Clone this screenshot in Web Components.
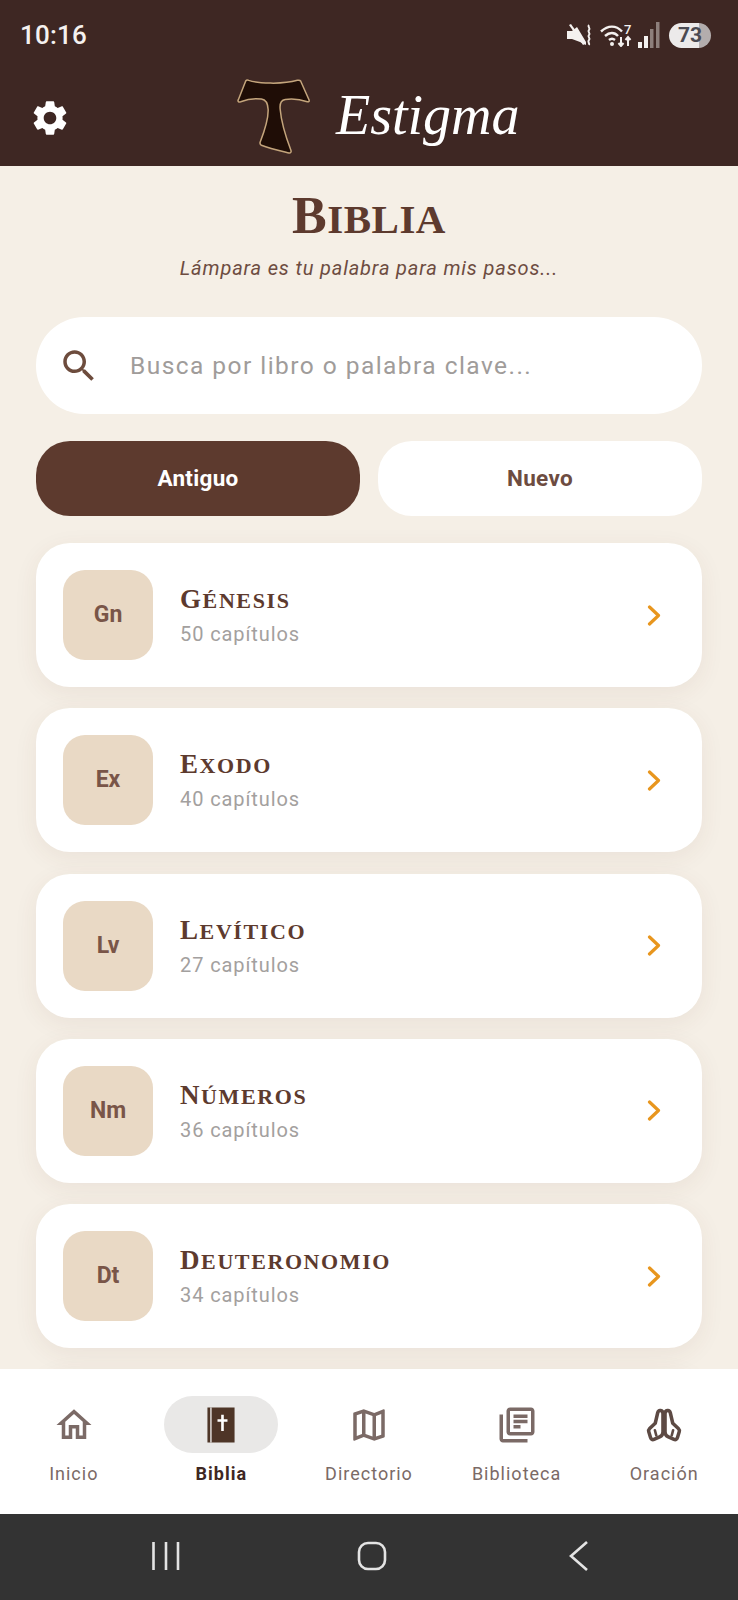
<!DOCTYPE html>
<html lang="es">
<head>
<meta charset="utf-8">
<title>Estigma - Biblia</title>
<style>
    html, body { margin: 0; padding: 0; background: #f5efe6; }
</style>
</head>
<body>
<app-shell>
    <status-bar slot="top"></status-bar>
    <app-bar slot="top"></app-bar>

    <page-title heading="Biblia">Lámpara es tu palabra para mis pasos...</page-title>
    <search-box placeholder="Busca por libro o palabra clave..."></search-box>
    <testament-tabs></testament-tabs>
    <book-card abbr="Gn" name="Génesis" chapters="50 capítulos"></book-card>
    <book-card abbr="Ex" name="Exodo" chapters="40 capítulos"></book-card>
    <book-card abbr="Lv" name="Levítico" chapters="27 capítulos"></book-card>
    <book-card abbr="Nm" name="Números" chapters="36 capítulos"></book-card>
    <book-card abbr="Dt" name="Deuteronomio" chapters="34 capítulos"></book-card>
    <book-card></book-card>

    <bottom-nav slot="bottom"></bottom-nav>
    <system-nav slot="bottom"></system-nav>
</app-shell>

<script>
// material style icons, all on a 24 box
const icons = {
    home: '<path fill="currentColor" d="M12 5.69l5 4.5V18h-2v-6H9v6H7v-7.81l5-4.5M12 3L2 12h3v8h6v-6h2v6h6v-8h3L12 3z"/>',
    map: '<path fill="currentColor" d="M20.5 3l-.16.03L15 5.1 9 3 3.36 4.9c-.21.07-.36.25-.36.48V20.5c0 .28.22.5.5.5l.16-.03L9 18.9l6 2.1 5.64-1.9c.21-.07.36-.25.36-.48V3.5c0-.28-.22-.5-.5-.5zM10 5.47l4 1.4v11.66l-4-1.4V5.47zm-5 .99l3-1.01v11.7l-3 1.16V6.46zm14 11.08l-3 1.01V6.86l3-1.16v11.84z"/>',
    library: '<path fill="currentColor" d="M4 6H2v14c0 1.1.9 2 2 2h14v-2H4V6zm16-4H8c-1.1 0-2 .9-2 2v12c0 1.1.9 2 2 2h12c1.1 0 2-.9 2-2V4c0-1.1-.9-2-2-2zm0 14H8V4h12v12zM10 9h8v2h-8zm0 3h4v2h-4zm0-6h8v2h-8z"/>',
    bible: '<rect x="4.250" y="2" width="15.500" height="20" fill="#4e3527"/><rect x="5.900" y="2" width=".7" height="20" fill="#fff"/><path fill="#fff" d="M12.100 6.200h1.500v2.500h2.100v1.500h-2.100v5.200h-1.500v-5.200H10V8.700h2.100z"/>',
    pray: '<g fill="none" stroke="currentColor" stroke-width="2" stroke-linejoin="round" stroke-linecap="round"><path d="M11.400 16.500V5.600c0-2.200-2.500-2.500-3-.6L7 11l-3.200 3c-.6.600-.7 1.200-.5 1.900l1 3.300c.3 1 1.100 1.400 2 1l3.200-1.400c1.200-.5 1.900-1.500 1.900-2.800"/><path d="M12.600 16.500V5.600c0-2.200 2.500-2.500 3-.6L17 11l3.200 3c.6.600.7 1.200.5 1.900l-1 3.300c-.3 1-1.100 1.400-2 1l-3.200-1.400c-1.200-.5-1.900-1.500-1.900-2.800"/><path d="M6.800 15l.8 3M17.200 15l-.8 3" stroke-width="1.500"/></g>'
};

class AppShell extends HTMLElement {
    constructor() {
        super();
        this.attachShadow({mode: 'open'});
        this.shadowRoot.innerHTML = `
            <style>
                :host { display: flex; flex-direction: column; height: 1600px; overflow: hidden; background: #f5efe6; }
                main {
                    flex: 1;
                    min-height: 0;
                    overflow: hidden;
                    padding: 0 36px;
                    display: flex;
                    flex-direction: column;
                }
            </style>
            <slot name="top"></slot>
            <main><slot></slot></main>
            <slot name="bottom"></slot>
        `;
    }
}

class StatusBar extends HTMLElement {
    constructor() {
        super();
        this.attachShadow({mode: 'open'});
        this.shadowRoot.innerHTML = `
            <style>
                :host {
                    display: flex;
                    align-items: center;
                    height: 70px;
                    padding: 0 27px 0 20px;
                    background: #3e2723;
                    color: #f4f1ef;
                    font-family: Roboto, sans-serif;
                }
                .time { font-size: 26px; font-weight: 500; letter-spacing: .2px; }
                .icons { margin-left: auto; display: flex; align-items: center; gap: 6px; }
                svg { display: block; }
                .battery {
                    width: 42px;
                    height: 25px;
                    margin-left: 3px;
                    border-radius: 13px;
                    background: linear-gradient(90deg, #eceaea 71%, #b3adad 71%);
                    color: #4a4a52;
                    font-size: 21px;
                    font-weight: 700;
                    line-height: 25px;
                    text-align: center;
                }
            </style>
            <span class="time">10:16</span>
            <div class="icons">
                <svg width="25" height="22" viewBox="0 0 25 22">
                    <path fill="currentColor" d="M0 7h5L10 3 19 18v3L13 18 5 15H0z"/>
                    <path fill="currentColor" d="M2 1l2-1 14 20-2 1z"/>
                    <path fill="none" stroke="currentColor" stroke-width="2" d="M22 1c-2 2 2 3 0 5s2 3 0 5 2 3 0 5 1 3 0 5"/>
                </svg>
                <svg style="margin-left:2px" width="32" height="24" viewBox="0 0 32 24">
                    <g fill="none" stroke="currentColor" stroke-width="2.400">
                        <path d="M1 8.500c7-6.500 15-6.500 21 0"/>
                        <path d="M5 13c4.500-4 9.500-4 13 0"/>
                        <path d="M9 17c2-1.700 4-1.700 6 0"/>
                    </g>
                    <circle cx="12" cy="21" r="2" fill="currentColor"/>
                    <path fill="none" stroke="currentColor" stroke-width="2" d="M21 14v9M18.500 20l2.500 3 2.500-3M28 23v-9M25.500 17l2.500-3 2.500 3"/>
                    <text x="24" y="11" font-family="Roboto, sans-serif" font-size="13" font-weight="500" fill="currentColor">7</text>
                </svg>
                <svg width="22" height="26" viewBox="0 0 22 26">
                    <rect x="0" y="20" width="4" height="6" fill="currentColor"/>
                    <rect x="6" y="14" width="4" height="12" fill="currentColor"/>
                    <rect x="12" y="7" width="3.500" height="19" fill="#8d7f7b"/>
                    <rect x="18" y="0" width="3.500" height="26" fill="#8d7f7b"/>
                </svg>
                <div class="battery">73</div>
            </div>
        `;
    }
}

class AppBar extends HTMLElement {
    constructor() {
        super();
        this.attachShadow({mode: 'open'});
        this.shadowRoot.innerHTML = `
            <style>
                :host {
                    display: flex;
                    align-items: center;
                    height: 96px;
                    padding-left: 29px;
                    background: #3e2723;
                    color: #fff;
                }
                svg { display: block; flex: none; }
                .logo { margin: -2px 0 0 164px; }
                .name {
                    margin: -6px 0 0 24px;
                    font-family: "Liberation Serif", serif;
                    font-style: italic;
                    font-size: 56px;
                    line-height: 70px;
                }
            </style>
            <svg width="42" height="42" viewBox="0 0 24 24">
                <path fill="currentColor" d="M19.14 12.94c.04-.3.06-.61.06-.94 0-.32-.02-.64-.07-.94l2.03-1.58c.18-.14.23-.41.12-.61l-1.92-3.32c-.12-.22-.37-.29-.59-.22l-2.39.96c-.5-.38-1.03-.7-1.62-.94l-.36-2.54c-.04-.24-.24-.41-.48-.41h-3.84c-.24 0-.43.17-.47.41l-.36 2.54c-.59.24-1.13.57-1.62.94l-2.39-.96c-.22-.08-.47 0-.59.22L2.74 8.87c-.12.21-.08.47.12.61l2.03 1.58c-.05.3-.09.63-.09.94s.02.64.07.94l-2.03 1.58c-.18.14-.23.41-.12.61l1.92 3.32c.12.22.37.29.59.22l2.39-.96c.5.38 1.03.7 1.62.94l.36 2.54c.05.24.24.41.48.41h3.84c.24 0 .44-.17.47-.41l.36-2.54c.59-.24 1.13-.56 1.62-.94l2.39.96c.22.08.47 0 .59-.22l1.92-3.32c.12-.22.07-.47-.12-.61l-2.01-1.58zM12 15.6c-1.98 0-3.6-1.62-3.6-3.6s1.62-3.6 3.6-3.6 3.6 1.62 3.6 3.6-1.62 3.6-3.6 3.6z"/>
            </svg>
            <svg class="logo" width="77" height="78" viewBox="40 25 230 233">
                <path fill="#1f0d06" stroke="#c4a57c" stroke-width="4.500" stroke-linejoin="round"
                    d="M72 34c2-3 5-4 9-2 25 9 100 13 145 0 4-1 8-1 10 2l25 56c2 5-1 7-5 6-20-7-45-10-66-7-14 2-17 12-15 30 3 35 18 85 32 122 2 5-1 9-6 8-30-7-58-13-82-23-4-2-5-5-4-9 14-36 25-70 24-98-1-20-6-29-20-31-20-3-45 1-62 8-6 2-10-1-7-6z"/>
            </svg>
            <span class="name">Estigma</span>
        `;
    }
}

class PageTitle extends HTMLElement {
    constructor() {
        super();
        this.attachShadow({mode: 'open'});
        this.shadowRoot.innerHTML = `
            <style>
                :host { display: block; flex: none; height: 151px; text-align: center; color: #5d3a2e; }
                h1 {
                    margin: 0;
                    padding-top: 20px;
                    font-family: "Liberation Serif", serif;
                    text-transform: uppercase;
                    font-size: 41px;
                    line-height: 60px;
                    font-weight: 700;
                    letter-spacing: .5px;
                }
                h1::first-letter { font-size: 52px; }
                p {
                    margin: 6px 0 0;
                    font-family: Roboto, sans-serif;
                    font-style: italic;
                    font-size: 20px;
                    line-height: 26px;
                    letter-spacing: .85px;
                    color: #6d4c41;
                }
            </style>
            <h1></h1>
            <p><slot></slot></p>
        `;
        this.shadowRoot.querySelector('h1').textContent = this.getAttribute('heading');
    }
}

class SearchBox extends HTMLElement {
    constructor() {
        super();
        this.attachShadow({mode: 'open'});
        this.shadowRoot.innerHTML = `
            <style>
                :host {
                    display: flex;
                    align-items: center;
                    flex: none;
                    height: 97px;
                    padding-left: 22px;
                    border-radius: 48px;
                    background: #fff;
                    font-family: Roboto, sans-serif;
                }
                svg { flex: none; display: block; }
                span { margin-left: 30px; font-size: 24.500px; letter-spacing: 1.450px; color: #a09c9a; }
            </style>
            <svg width="42" height="42" viewBox="0 0 24 24">
                <path fill="#6d4c3d" d="M15.500 14h-.79l-.28-.27C15.410 12.590 16 11.110 16 9.500 16 5.910 13.090 3 9.500 3S3 5.910 3 9.500 5.910 16 9.500 16c1.610 0 3.090-.59 4.230-1.570l.27.28v.79l5 4.990L20.490 19l-4.990-5zm-6 0C7.010 14 5 11.990 5 9.500S7.010 5 9.500 5 14 7.010 14 9.500 11.990 14 9.500 14z"/>
            </svg>
            <span></span>
        `;
        this.shadowRoot.querySelector('span').textContent = this.getAttribute('placeholder');
    }
}

class TestamentTabs extends HTMLElement {
    constructor() {
        super();
        this.attachShadow({mode: 'open'});
        this.shadowRoot.innerHTML = `
            <style>
                :host {
                    display: grid;
                    flex: none;
                    grid-template-columns: 1fr 1fr;
                    gap: 18px;
                    margin: 27px 0 27px;
                    font-family: Roboto, sans-serif;
                }
                div {
                    height: 75px;
                    border-radius: 34px;
                    background: #fff;
                    color: #6d4c41;
                    font-size: 22.500px;
                    font-weight: 700;
                    letter-spacing: .3px;
                    line-height: 75px;
                    text-align: center;
                }
                .active { background: #5d3a2e; color: #fff; }
            </style>
            <div class="active">Antiguo</div>
            <div>Nuevo</div>
        `;
    }
}

class BookCard extends HTMLElement {
    constructor() {
        super();
        this.attachShadow({mode: 'open'});
        this.shadowRoot.innerHTML = `
            <style>
                :host {
                    display: flex;
                    flex: none;
                    align-items: center;
                    box-sizing: border-box;
                    height: 144px;
                    margin-bottom: 21.300px;
                    padding: 0 27px;
                    border-radius: 34px;
                    background: #fff;
                    box-shadow: 0 6px 24px rgba(93, 58, 46, .07);
                    font-family: Roboto, sans-serif;
                }
                .abbr {
                    flex: none;
                    width: 90px;
                    height: 90px;
                    border-radius: 22px;
                    background: #e9d9c5;
                    color: #795548;
                    font-size: 23px;
                    font-weight: 700;
                    line-height: 90px;
                    text-align: center;
                }
                .text { margin-left: 27px; }
                .name {
                    font-family: "Liberation Serif", serif;
                    text-transform: uppercase;
                    font-size: 22px;
                    font-weight: 700;
                    line-height: 34px;
                    letter-spacing: 1.600px;
                    color: #5d3a2e;
                }
                .name::first-letter { font-size: 27px; }
                .chapters { margin-top: 2px; font-size: 20px; line-height: 28px; letter-spacing: .9px; color: #a3a09e; }
                svg { display: block; margin-left: auto; margin-right: 14px; }
            </style>
            <div class="abbr"></div>
            <div class="text"><div class="name"></div><div class="chapters"></div></div>
            <svg width="14" height="21" viewBox="0 0 14 21">
                <path fill="none" stroke="#e8961e" stroke-width="3.200" stroke-linecap="round" stroke-linejoin="round" d="M2.500 2l9 8.500-9 8.500"/>
            </svg>
        `;
        if (!this.hasAttribute('name')) return;
        this.shadowRoot.querySelector('.abbr').textContent = this.getAttribute('abbr');
        this.shadowRoot.querySelector('.name').textContent = this.getAttribute('name');
        this.shadowRoot.querySelector('.chapters').textContent = this.getAttribute('chapters');
    }
}

class NavItem extends HTMLElement {
    constructor() {
        super();
        this.attachShadow({mode: 'open'});
        this.shadowRoot.innerHTML = `
            <style>
                :host {
                    display: flex;
                    flex-direction: column;
                    align-items: center;
                    color: #7b6a66;
                    font-family: Roboto, sans-serif;
                }
                .pill {
                    display: flex;
                    align-items: center;
                    justify-content: center;
                    width: 114px;
                    height: 57px;
                    border-radius: 29px;
                }
                :host([active]) { color: #3e2723; }
                :host([active]) .pill { background: #e9e8e7; }
                :host([active]) .label { font-weight: 700; }
                svg { display: block; }
                .label { margin-top: 9px; font-size: 18px; line-height: 24px; letter-spacing: 1px; }
                :host([icon="pray"]) svg { color: #5d4a44; }
            </style>
            <div class="pill"><svg width="42" height="42" viewBox="0 0 24 24">${icons[this.getAttribute('icon')]}</svg></div>
            <div class="label"></div>
        `;
        this.shadowRoot.querySelector('.label').textContent = this.getAttribute('label');
    }
}

class BottomNav extends HTMLElement {
    constructor() {
        super();
        this.attachShadow({mode: 'open'});
        this.shadowRoot.innerHTML = `
            <style>
                :host {
                    display: grid;
                    grid-template-columns: repeat(5, 1fr);
                    box-sizing: border-box;
                    height: 145.500px;
                    padding-top: 27.500px;
                    background: #fff;
                }
            </style>
            <nav-item icon="home" label="Inicio"></nav-item>
            <nav-item icon="bible" label="Biblia" active></nav-item>
            <nav-item icon="map" label="Directorio"></nav-item>
            <nav-item icon="library" label="Biblioteca"></nav-item>
            <nav-item icon="pray" label="Oración"></nav-item>
        `;
    }
}

class SystemNav extends HTMLElement {
    constructor() {
        super();
        this.attachShadow({mode: 'open'});
        this.shadowRoot.innerHTML = `
            <style>
                :host {
                    display: flex;
                    justify-content: space-between;
                    align-items: center;
                    height: 86px;
                    padding: 0 148px 2px 150px;
                    box-sizing: border-box;
                    background: #333;
                }
                svg { display: block; }
                .home { margin-left: -4px; }
            </style>
            <svg width="30" height="30" viewBox="0 0 30 30" fill="none" stroke="#e4e4e4" stroke-width="2.600">
                <path d="M3.500 1v28M16 1v28M28 1v28"/>
            </svg>
            <svg class="home" width="30" height="30" viewBox="0 0 30 30" fill="none" stroke="#e4e4e4" stroke-width="2.600">
                <rect x="2" y="2" width="26" height="26" rx="9"/>
            </svg>
            <svg width="22" height="30" viewBox="0 0 22 30" fill="none" stroke="#e4e4e4" stroke-width="2.600">
                <path d="M19 1L3 15l16 14"/>
            </svg>
        `;
    }
}

customElements.define('app-shell', AppShell);
customElements.define('status-bar', StatusBar);
customElements.define('app-bar', AppBar);
customElements.define('page-title', PageTitle);
customElements.define('search-box', SearchBox);
customElements.define('testament-tabs', TestamentTabs);
customElements.define('book-card', BookCard);
customElements.define('nav-item', NavItem);
customElements.define('bottom-nav', BottomNav);
customElements.define('system-nav', SystemNav);
</script>
</body>
</html>
